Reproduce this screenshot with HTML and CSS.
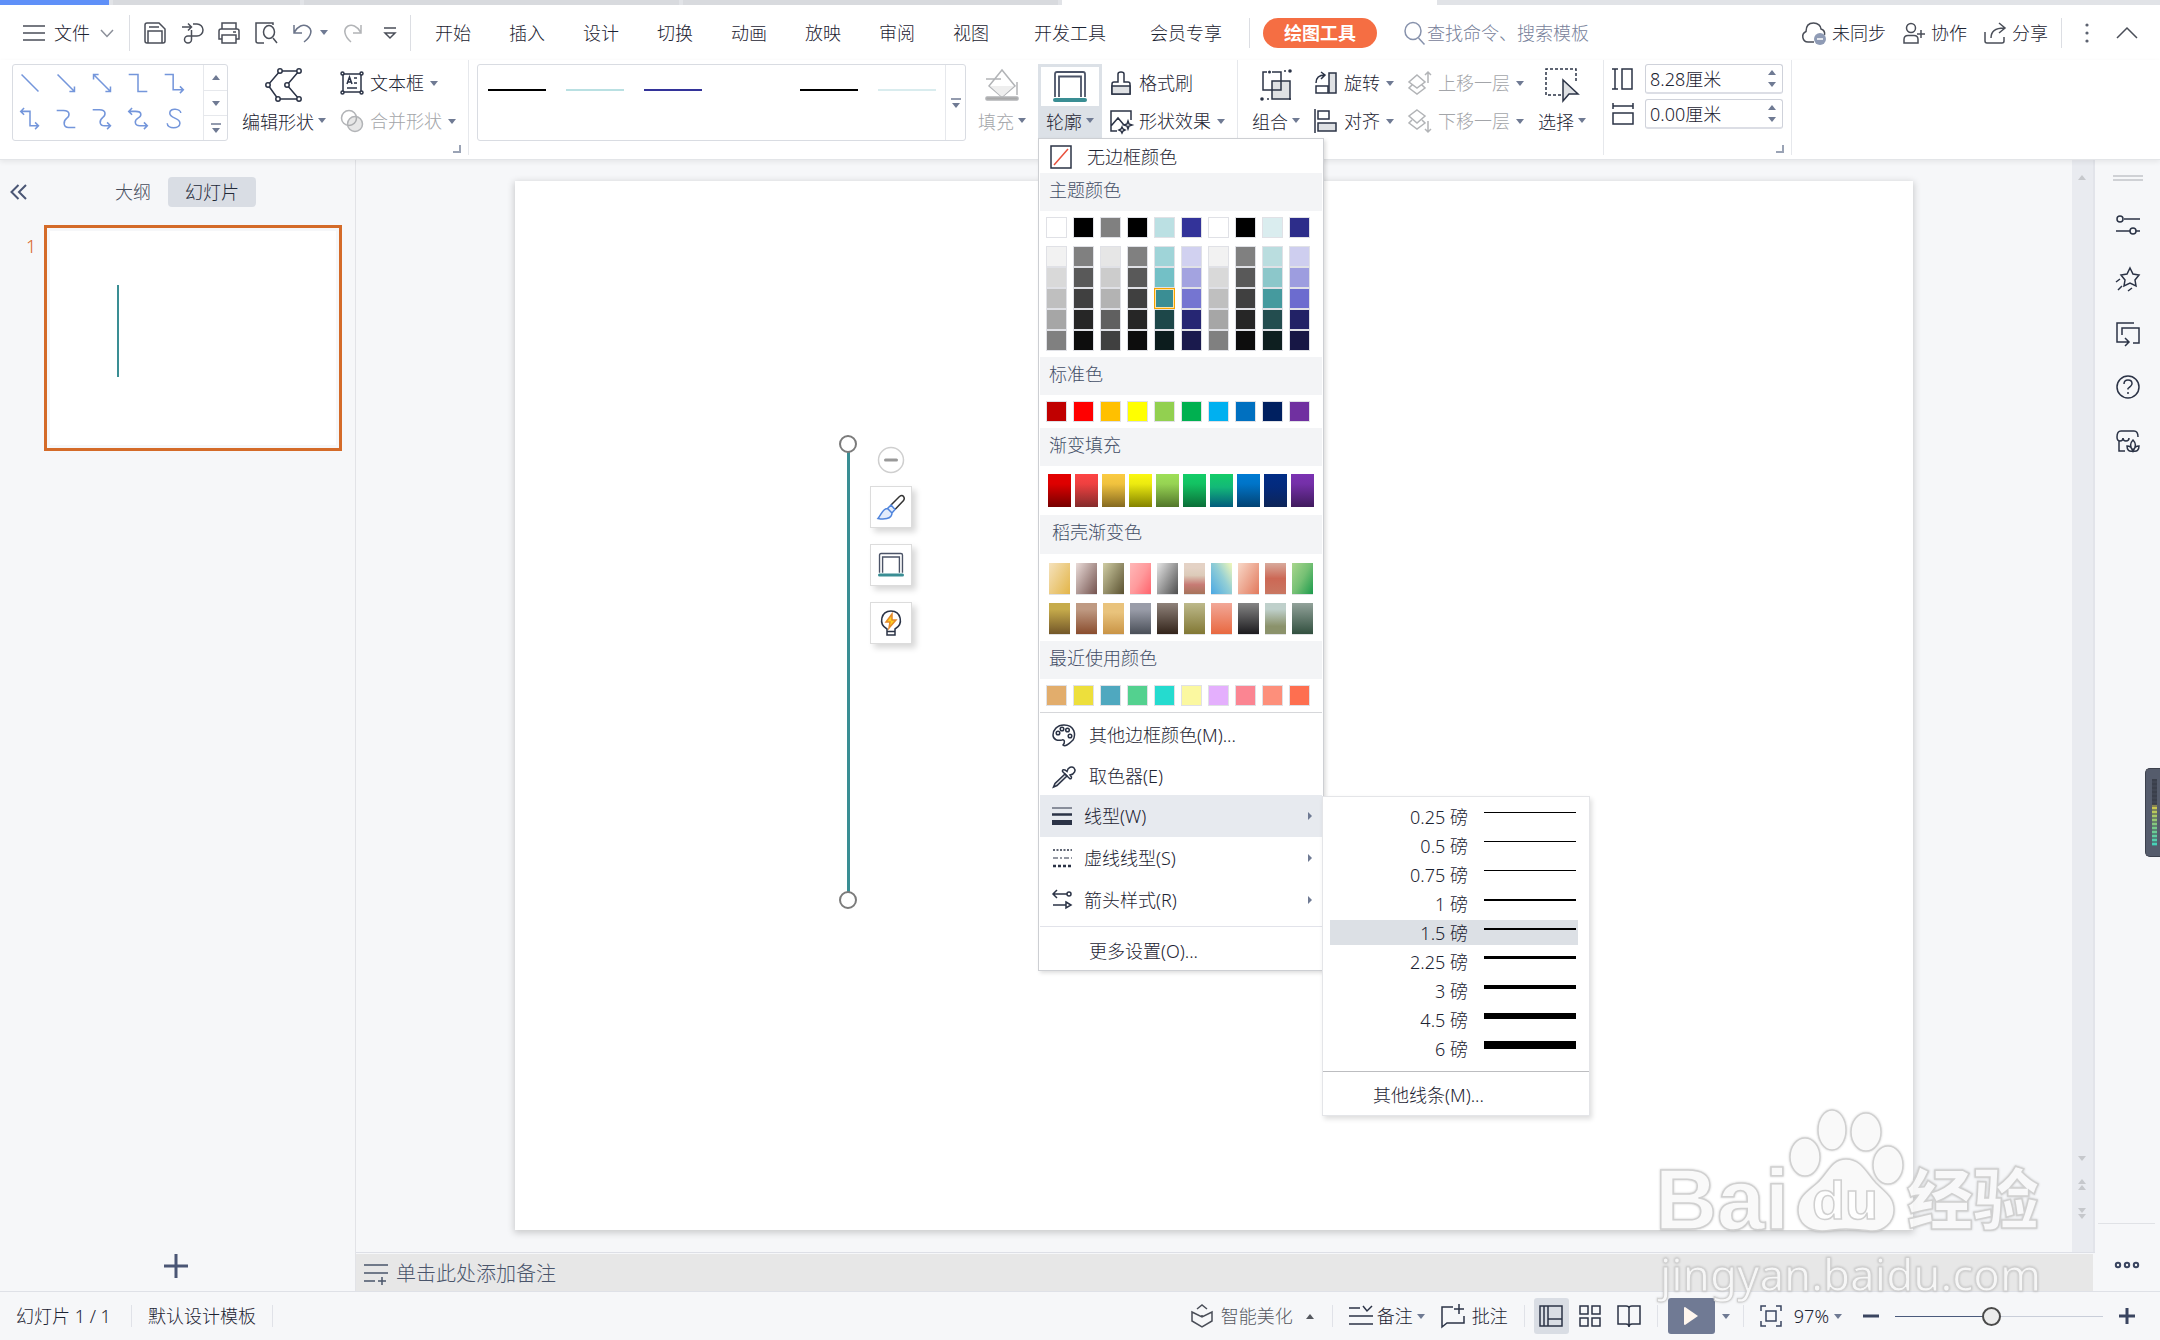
FILE: index.html
```html
<!DOCTYPE html>
<html lang="zh-CN">
<head>
<meta charset="utf-8">
<title>演示文稿</title>
<link rel="stylesheet" href="styles.css">
</head>
<body>
<svg class="defs" aria-hidden="true">
  <symbol id="caret" viewBox="0 0 8 5"><path d="M0 0h8L4 5z" fill="currentColor"/></symbol>
  <symbol id="caret-up" viewBox="0 0 8 5"><path d="M0 5h8L4 0z" fill="currentColor"/></symbol>
  <symbol id="more" viewBox="0 0 10 10"><path d="M0 1h10" stroke="currentColor" stroke-width="1.5"/><path d="M1 5h8L5 10z" fill="currentColor"/></symbol>
  <symbol id="outline" viewBox="0 0 34 34"><path d="M2 27V4q0-2 2-2h26q2 0 2 2v23M6 27V6.500h22V27" fill="none" stroke="currentColor" stroke-width="1.800"/><rect x="0" y="28" width="34" height="4" rx="2" fill="#3a8e94"/></symbol>
</svg>

<div class="app">
  <div class="doctabs"><span class="doctab current"></span><span class="doctab t2"></span><span class="doctab t3"></span><span class="doctab t3"></span><span class="doctab active"></span><span class="doctab rest"></span></div>

  <header class="menubar">
    <button class="file"><svg class="ic" viewBox="0 0 22 24" width="22" height="24"><path d="M0 5h22M0 12h22M0 19h22"/></svg>文件<svg class="ic thin" viewBox="0 0 16 16" width="16" height="16"><path d="m2 5 6 6.500L14 5"/></svg></button>
    <span class="sep tall"></span>
    <div class="quick">
      <button aria-label="保存"><svg class="ic" viewBox="0 0 24 24" width="24" height="24"><path d="M4 2h12l6 6v12q0 2-2 2H4q-2 0-2-2V4q0-2 2-2zM5 22V10h14v12M6 6h10"/></svg></button>
      <button aria-label="输出PDF"><svg class="ic" viewBox="0 0 24 24" width="24" height="24"><path d="M2 6h9M8 2.500 11.500 6 8 9.500M13 3h4a5.500 5.500 0 0 1 0 12H8a3.500 3.500 0 1 0 3.500 3.500V9"/></svg></button>
      <button aria-label="打印"><svg class="ic" viewBox="0 0 24 24" width="24" height="24"><path d="M5 8V2h14v6M5 18H2V10q0-2 2-2h16q2 0 2 2v8h-3M5 14h14v8H5zM16 11h3"/></svg></button>
      <button aria-label="打印预览"><svg class="ic" viewBox="0 0 24 24" width="24" height="24"><path d="M10 22H4q-2 0-2-2V2h17v2M19 17l4 5"/><ellipse cx="15" cy="11" rx="5.500" ry="6.500"/></svg></button>
      <button class="undo" aria-label="撤销"><svg class="ic slate" viewBox="0 0 24 24" width="24" height="24"><path d="M3 4v8h8M3.500 11C7 5 12 3 16 5c6 3 5 10-3 16"/></svg><svg class="caret"><use href="#caret"/></svg></button>
      <button aria-label="恢复"><svg class="ic pale" viewBox="0 0 24 24" width="24" height="24"><path d="M20 4v8h-8M19.500 11C16 5 11 3 7 5c-5 3-4 10 3 16"/></svg></button>
      <button aria-label="自定义"><svg class="ic" viewBox="0 0 24 24" width="24" height="24"><path d="M6 7h12M7 12h10l-5 5z"/></svg></button>
    </div>
    <span class="sep tall quickend"></span>
    <nav class="tabs"><button>开始</button><button>插入</button><button>设计</button><button>切换</button><button>动画</button><button>放映</button><button>审阅</button><button>视图</button></nav>
    <nav class="tabs wide"><button>开发工具</button><button>会员专享</button></nav>
    <span class="sep"></span>
    <button class="pill">绘图工具</button>
    <label class="search"><svg class="ic" viewBox="0 0 24 28" width="24" height="28"><ellipse cx="10" cy="12" rx="8" ry="8.500"/><path d="m15.500 19 6 6.500"/></svg><input type="text" placeholder="查找命令、搜索模板" aria-label="查找命令"></label>
    <div class="account">
      <button><svg class="ic" viewBox="0 0 26 26" width="26" height="26"><path d="M13 22H7a5.500 5.500 0 0 1-2-10.500C5 6 8 3 12.500 3S20 6 20 9c3 1 4 3.500 3.500 6"/><circle cx="19" cy="19" r="6" fill="#8f9bb5" stroke="none"/><path d="M16 19h6" stroke="#fff"/></svg>未同步</button>
      <button><svg class="ic" viewBox="0 0 24 26" width="24" height="26"><circle cx="9" cy="8" r="4.500"/><path d="M2 23v-3.500q0-4 4-4h6q4 0 4 4V23zM15 14h8M19 10v8"/></svg>协作</button>
      <button><svg class="ic" viewBox="0 0 24 26" width="24" height="26"><path d="M2 12v9q0 2 2 2h15q2 0 2-2v-4M8 18c0-7 4-10 13-10M16 3l6 5-6 5"/></svg>分享</button>
    </div>
    <span class="sep"></span>
    <button class="dots" aria-label="更多"><svg viewBox="0 0 6 22" width="6" height="22" fill="#5c6270"><circle cx="3" cy="3" r="1.600"/><circle cx="3" cy="11" r="1.600"/><circle cx="3" cy="19" r="1.600"/></svg></button>
    <button class="fold" aria-label="折叠功能区"><svg class="ic" viewBox="0 0 22 14" width="22" height="14"><path d="m1 12 10-10 10 10"/></svg></button>
  </header>

  <section class="ribbon">
    <div class="group shapes">
      <div class="gallery">
        <div class="cells">
          <button aria-label="直线"><svg viewBox="0 0 26 26"><path d="m3 3 20 20"/></svg></button>
          <button aria-label="箭头"><svg viewBox="0 0 26 26"><path d="m3 3 20 20M23 17v6h-6"/></svg></button>
          <button aria-label="双箭头"><svg viewBox="0 0 26 26"><path d="m3 3 20 20M23 17v6h-6M3 9V3h6"/></svg></button>
          <button aria-label="肘形"><svg viewBox="0 0 26 26"><path d="M2 3h11v20h11"/></svg></button>
          <button aria-label="肘形箭头"><svg viewBox="0 0 26 26"><path d="M2 3h10v18h12M20 17l4 4-4 4"/></svg></button>
          <button aria-label="肘形双箭头"><svg viewBox="0 0 26 26"><path d="M2 4h11v17h10M19 17l4 4-4 4M6 0 2 4l4 4"/></svg></button>
          <button aria-label="曲线"><svg viewBox="0 0 26 26"><path d="M2 3h8c9 0 7 7 4 9-5 4-4 11 2 11h8"/></svg></button>
          <button aria-label="曲线箭头"><svg viewBox="0 0 26 26"><path d="M2 2h8c9 0 7 7 4 9-5 4-4 10 2 10h7M19 17l4 4-4 4"/></svg></button>
          <button aria-label="曲线双箭头"><svg viewBox="0 0 26 26"><path d="M2 4h8c9 0 7 6 3 8-5 3-4 9 2 9h9M20 17l4 4-4 4M6 0 2 4l4 4"/></svg></button>
          <button aria-label="自由曲线"><svg viewBox="0 0 26 26"><path d="M21 6c0-5-13-7-13 0 0 7 12 5 12 12 0 7-15 7-15 0"/></svg></button>
        </div>
        <div class="scroll"><button aria-label="上"><svg class="caret"><use href="#caret-up"/></svg></button><button aria-label="下"><svg class="caret"><use href="#caret"/></svg></button><button aria-label="更多形状"><svg class="more"><use href="#more"/></svg></button></div>
      </div>
      <button class="big edit"><span class="pic"><svg class="ic dark" viewBox="0 0 38 34" width="38" height="34"><path d="M15 3h19L22 17l12 14H13L3 17z"/><g fill="#fff"><circle cx="15" cy="3" r="2.200"/><circle cx="34" cy="3" r="2.200"/><circle cx="22" cy="17" r="2.200"/><circle cx="34" cy="31" r="2.200"/><circle cx="13" cy="31" r="2.200"/><circle cx="3" cy="17" r="2.200"/></g></svg></span><span class="cap">编辑形状<svg class="caret"><use href="#caret"/></svg></span></button>
      <div class="pair">
        <button><svg class="ic dark" viewBox="0 0 24 24" width="24" height="24"><path d="M3 3h18v18H3zM7 13l2.500-7L12 13M8 11h3M14 7h3M14 12h3M7 17h10"/><g fill="#fff"><circle cx="2.500" cy="2.500" r="1.500"/><circle cx="21.500" cy="2.500" r="1.500"/><circle cx="2.500" cy="21.500" r="1.500"/><circle cx="21.500" cy="21.500" r="1.500"/></g></svg>文本框<svg class="caret"><use href="#caret"/></svg></button>
        <button class="off"><svg class="ic pale" viewBox="0 0 24 24" width="24" height="24"><circle cx="9" cy="9" r="7.500"/><circle cx="15" cy="15" r="7.500" fill="#8883" /></svg>合并形状<svg class="caret"><use href="#caret"/></svg></button>
      </div>
      <span class="corner"></span>
    </div>

    <div class="group styles">
      <div class="linebox">
        <div class="strokes"><button aria-label="黑色线条" style="background:#000"></button><button aria-label="浅青线条" style="background:#b9e0e2"></button><button aria-label="靛蓝线条" style="background:#333399"></button><button aria-label="白色线条" style="background:#fff"></button><button aria-label="深黑线条" style="background:#000"></button><button aria-label="淡青线条" style="background:#d9ecee"></button></div>
        <button class="open" aria-label="更多样式"><svg class="more"><use href="#more"/></svg></button>
      </div>
      <button class="big off"><span class="pic"><svg class="ic pale" viewBox="0 0 34 34" width="34" height="34"><path d="M4 18 17 2l13 16-13 11zM1 11h15M32 14v13"/><path d="M5 18h24L17 29z" fill="#eee" stroke="none"/><rect x="1" y="29" width="32" height="3" rx="1" fill="#a8a8a8"/></svg></span><span class="cap">填充<svg class="caret"><use href="#caret"/></svg></span></button>
      <div class="drawset">
        <div class="drop">
          <button class="big on"><span class="pic"><svg class="ink" width="34" height="34"><use href="#outline"/></svg></span><span class="cap">轮廓<svg class="caret"><use href="#caret"/></svg></span></button>
          <div class="menu">
            <button class="none"><svg class="ic dark" viewBox="0 0 22 24" width="22" height="24"><path d="M1 1h20v22H1z"/><path d="M4 20 18 4" stroke="#e8503c"/></svg>无边框颜色</button>
            <h3>主题颜色</h3>
            <div class="sw">
              <button style="background:#fff"></button><button style="background:#000"></button><button style="background:#808080"></button><button style="background:#000"></button><button style="background:#bbe0e3"></button><button style="background:#333399"></button><button style="background:#fff"></button><button style="background:#000"></button><button style="background:#daedef"></button><button style="background:#2d2d8a"></button>
            </div>
            <div class="sw tints">
              <button style="background:#f2f2f2"></button><button style="background:#808080"></button><button style="background:#e6e6e6"></button><button style="background:#808080"></button><button style="background:#9fd4d8"></button><button style="background:#d1d1f0"></button><button style="background:#f2f2f2"></button><button style="background:#808080"></button><button style="background:#badddf"></button><button style="background:#ceceef"></button>
              <button style="background:#d9d9d9"></button><button style="background:#595959"></button><button style="background:#cccccc"></button><button style="background:#595959"></button><button style="background:#73c0c6"></button><button style="background:#a3a3e0"></button><button style="background:#d9d9d9"></button><button style="background:#595959"></button><button style="background:#8cc7ca"></button><button style="background:#9d9ddf"></button>
              <button style="background:#bfbfbf"></button><button style="background:#404040"></button><button style="background:#b3b3b3"></button><button style="background:#404040"></button><button class="picked" style="background:#3a8e94"></button><button style="background:#7575d1"></button><button style="background:#bfbfbf"></button><button style="background:#404040"></button><button style="background:#459a9e"></button><button style="background:#6c6ccf"></button>
              <button style="background:#a6a6a6"></button><button style="background:#262626"></button><button style="background:#606060"></button><button style="background:#262626"></button><button style="background:#1d4749"></button><button style="background:#262673"></button><button style="background:#a6a6a6"></button><button style="background:#262626"></button><button style="background:#234d4f"></button><button style="background:#222266"></button>
              <button style="background:#808080"></button><button style="background:#0d0d0d"></button><button style="background:#404040"></button><button style="background:#0d0d0d"></button><button style="background:#0c1c1d"></button><button style="background:#1a1a4d"></button><button style="background:#808080"></button><button style="background:#0d0d0d"></button><button style="background:#0e1f20"></button><button style="background:#171745"></button>
            </div>
            <h3>标准色</h3>
            <div class="sw">
              <button style="background:#c00000"></button><button style="background:#ff0000"></button><button style="background:#ffc000"></button><button style="background:#ffff00"></button><button style="background:#92d050"></button><button style="background:#00b050"></button><button style="background:#00b0f0"></button><button style="background:#0070c0"></button><button style="background:#002060"></button><button style="background:#7030a0"></button>
            </div>
            <h3>渐变填充</h3>
            <div class="grads">
              <button style="background:linear-gradient(#e30000,#dd0000 30%,#760000)"></button><button style="background:linear-gradient(#fe4444,#ee4040 30%,#832b2b)"></button><button style="background:linear-gradient(#fbcb42,#f0c23e 30%,#846920)"></button><button style="background:linear-gradient(#fbf811,#ecea10 30%,#838200)"></button><button style="background:linear-gradient(#9edf57,#96d353 30%,#52762a)"></button><button style="background:linear-gradient(#14cd68,#13c262 30%,#0b6e38)"></button><button style="background:linear-gradient(#14cd68,#13b878 40%,#035c7d)"></button><button style="background:linear-gradient(#007bd3,#0074c8 30%,#034373)"></button><button style="background:linear-gradient(#012d86,#042a7c 40%,#0e2557)"></button><button style="background:linear-gradient(#7b32b2,#7430a8 30%,#401b5d)"></button>
            </div>
            <h3 class="docer">稻壳渐变色</h3>
            <div class="tiles">
              <button style="background:linear-gradient(120deg,#f5e2bd,#e3b548)"></button><button style="background:linear-gradient(120deg,#eadcd9,#74534e)"></button><button style="background:linear-gradient(120deg,#d0cda4,#5a5130)"></button><button style="background:linear-gradient(120deg,#ffb8b8,#ff9a9c 50%,#ff636c)"></button><button style="background:linear-gradient(120deg,#e6e6e6,#4e4e4e)"></button><button style="background:linear-gradient(#e4d2c5 15%,#dccbb9 40%,#c77b74 70%,#a6735a)"></button><button style="background:linear-gradient(60deg,#4aa8e4,#94cfd5 55%,#f2f8b8)"></button><button style="background:linear-gradient(120deg,#f8d8c8,#e2795c)"></button><button style="background:linear-gradient(#d8aa9c,#cc6855 50%,#c97762)"></button><button style="background:linear-gradient(120deg,#a9d68d,#75c074 50%,#1c9b4c)"></button>
              <button style="background:linear-gradient(#c6ab4b 20%,#735729)"></button><button style="background:linear-gradient(#bf9a83 20%,#8a4d2e)"></button><button style="background:linear-gradient(#e9c37c 30%,#c99446)"></button><button style="background:linear-gradient(#9a9da9 20%,#4a4f58)"></button><button style="background:linear-gradient(#8f827a,#33241a)"></button><button style="background:linear-gradient(#bdb98b,#827834)"></button><button style="background:linear-gradient(#f2a898,#e86840)"></button><button style="background:linear-gradient(#858585,#1c1b1e)"></button><button style="background:linear-gradient(#bfd0cb 20%,#8b926b 75%)"></button><button style="background:linear-gradient(#92a29a,#32503f)"></button>
            </div>
            <h3>最近使用颜色</h3>
            <div class="sw">
              <button style="background:#e2ad6c"></button><button style="background:#eddf3c"></button><button style="background:#4fa8bf"></button><button style="background:#53d18f"></button><button style="background:#25dbcf"></button><button style="background:#fbf8a0"></button><button style="background:#e4affd"></button><button style="background:#fb8592"></button><button style="background:#fd8f7b"></button><button style="background:#fe6f50"></button>
            </div>
            <hr>
            <button class="item"><svg class="ic dark" viewBox="0 0 24 24" width="24" height="24"><path d="M11 22c2 2 5 0 10-5 3-5 2-15-9-15C5 2 1 7 1 12c0 5 5 6 9 5 3-1 3 3 1 5z"/><circle cx="6" cy="10" r="1.800"/><circle cx="10" cy="6" r="1.800"/><circle cx="15.500" cy="7" r="1.800"/><circle cx="18" cy="13" r="1.800"/></svg>其他边框颜色(M)...</button>
            <button class="item"><svg class="ic dark" viewBox="0 0 24 24" width="24" height="24"><path d="M13 10 3 19.500 1.500 23 5 21.500 15 12z" fill="#dfe1e4"/><path d="m10.500 7.500 7 7q2 1 2-1.500l-1.500-2c5-1 6-5 4-7s-6-1-7 3.500l-2-1.500q-3-1-2.500 1.500z"/></svg>取色器(E)</button>
            <div class="parent">
              <button class="item sub hot"><svg class="ic dark" viewBox="0 0 20 20" width="20" height="20"><path d="M0 2h20" stroke-width="1"/><path d="M0 8.500h20" stroke-width="2.500"/><path d="M0 16.500h20" stroke-width="5"/></svg>线型(W)<svg class="go" viewBox="0 0 4 8"><path d="m0 0 4 4-4 4z" fill="currentColor"/></svg></button>
              <div class="submenu">
                <button>0.25 磅<span style="height:1px"></span></button>
                <button>0.5 磅<span style="height:1px"></span></button>
                <button>0.75 磅<span style="height:1px"></span></button>
                <button>1 磅<span style="height:2px"></span></button>
                <button class="picked">1.5 磅<span style="height:2px"></span></button>
                <button>2.25 磅<span style="height:3px"></span></button>
                <button>3 磅<span style="height:4px"></span></button>
                <button>4.5 磅<span style="height:6px"></span></button>
                <button>6 磅<span style="height:8px"></span></button>
                <hr>
                <button class="other">其他线条(M)...</button>
              </div>
            </div>
            <button class="item sub"><svg class="ic dark" viewBox="0 0 20 20" width="20" height="20"><path d="M1 2h19" stroke-width="1.500" stroke-dasharray="2 1.500"/><path d="M1 10h19" stroke-width="1" stroke-dasharray="5 2 2 2"/><path d="M1 18h19" stroke-width="2.500" stroke-dasharray="3 2"/></svg>虚线线型(S)<svg class="go" viewBox="0 0 4 8"><path d="m0 0 4 4-4 4z" fill="currentColor"/></svg></button>
            <button class="item sub"><svg class="ic dark" viewBox="0 0 20 20" width="20" height="20"><path d="M1 4h14M5 0 1 4l4 4M1 15h13M14 12l5 3-5 3z"/><circle cx="17" cy="4" r="2"/></svg>箭头样式(R)<svg class="go" viewBox="0 0 4 8"><path d="m0 0 4 4-4 4z" fill="currentColor"/></svg></button>
            <hr class="light">
            <button class="item last">更多设置(O)...</button>
          </div>
        </div>
        <div class="pair">
          <button><svg class="ic dark" viewBox="0 0 24 24" width="24" height="24"><path d="M3 23V13q0-2 2-2h4V3q0-2 3-2t3 2v8h4q2 0 2 2v10z"/><path d="M3 15h18v8H3z" fill="#dfe1e4"/></svg>格式刷</button>
          <button><svg class="ic dark" viewBox="0 0 24 24" width="24" height="24"><path d="M8 22H2V2h20v9M2 17l7-8 6 7M19 12l1 3 3 1-3 1-1 3-1-3-3-1 3-1zM13 18l1 2 2 1-2 1-1 2-1-2-2-1 2-1z"/></svg>形状效果<svg class="caret"><use href="#caret"/></svg></button>
        </div>
      </div>
    </div>

    <div class="group arrange">
      <button class="big"><span class="pic"><svg class="ic dark" viewBox="0 0 32 32" width="32" height="32"><path d="M12 12h18v18H12z" fill="#dfe1e4"/><path d="M7 3H3v18h18V3h-9"/><g fill="currentColor" stroke="none"><circle cx="9.500" cy="3" r="1.500"/><circle cx="30" cy="2" r="1.800"/><circle cx="2" cy="30" r="1.800"/><circle cx="30" cy="30" r="1"/><circle cx="25" cy="2" r="1"/><circle cx="8" cy="30" r="1"/></g></svg></span><span class="cap">组合<svg class="caret"><use href="#caret"/></svg></span></button>
      <div class="pair">
        <button><svg class="ic dark" viewBox="0 0 24 24" width="24" height="24"><path d="M2 15h12v7H2z"/><path d="M15 2h7v20h-7z" fill="#dfe1e4"/><path d="M2 12c0-4 2-8 9-8M7 1l4 3-4 4"/></svg>旋转<svg class="caret"><use href="#caret"/></svg></button>
        <button><svg class="ic dark" viewBox="0 0 24 24" width="24" height="24"><path d="M1 0v24M4 2h11v8H4z"/><path d="M4 14h18v8H4z" fill="#dfe1e4"/></svg>对齐<svg class="caret"><use href="#caret"/></svg></button>
      </div>
      <div class="pair">
        <button class="off"><svg class="ic pale" width="24" height="24" viewBox="0 0 24 24"><path d="m9 4 8 7-8 6-8-6zM4 14l-3 3 8 6 8-6-3-3M20 12V1M17 4l3-3 3 3"/></svg>上移一层<svg class="caret"><use href="#caret"/></svg></button>
        <button class="off"><svg class="ic pale" width="24" height="24" viewBox="0 0 24 24"><path d="m9 1 8 6-8 7-8-7zM4 11l-3 3 8 6 8-6-3-3M20 12v11M17 20l3 3 3-3"/></svg>下移一层<svg class="caret"><use href="#caret"/></svg></button>
      </div>
      <button class="big"><span class="pic"><svg class="ic dark" viewBox="0 0 36 36" width="36" height="36"><path d="M17 28H2V2h30v14" stroke-dasharray="3 2"/><path d="M19 13v21l6-7h9z" fill="#dfe1e4"/></svg></span><span class="cap">选择<svg class="caret"><use href="#caret"/></svg></span></button>
    </div>

    <div class="group size">
      <label><svg class="ic dark" viewBox="0 0 22 24" width="22" height="24"><path d="M3 2v20M0 2h6M0 22h6M10 2h10v20H10z"/></svg><span class="spin"><input type="text" value="8.28厘米" aria-label="高度"><span class="arrows"><svg class="caret"><use href="#caret-up"/></svg><svg class="caret"><use href="#caret"/></svg></span></span></label>
      <label><svg class="ic dark" viewBox="0 0 22 24" width="22" height="24"><path d="M1 4h20M1 1v6M21 1v6M1 11h20v11H1z"/></svg><span class="spin"><input type="text" value="0.00厘米" aria-label="宽度"><span class="arrows"><svg class="caret"><use href="#caret-up"/></svg><svg class="caret"><use href="#caret"/></svg></span></span></label>
      <span class="corner"></span>
    </div>
  </section>

  <main class="work">
    <aside class="panel">
      <div class="ptabs"><button class="close" aria-label="收起"><svg class="ic" viewBox="0 0 18 16" width="18" height="16"><path d="M8.500 1 1.500 8l7 7M16 1 9 8l7 7"/></svg></button><button class="ptab">大纲</button><button class="ptab on">幻灯片</button></div>
      <div class="thumbrow"><span class="num">1</span><button class="thumb" aria-label="幻灯片 1"><span class="page"><span class="mini"></span></span></button></div>
      <button class="add" aria-label="新建幻灯片"><svg class="ic" viewBox="0 0 26 26" width="26" height="26"><path d="M13 1v24M1 13h24"/></svg></button>
    </aside>

    <section class="center">
      <div class="view">
        <div class="canvas">
          <div class="slide">
            <span class="line"><i class="knob"></i><i class="knob"></i></span>
            <div class="float">
              <button class="minus" aria-label="收起工具"><svg viewBox="0 0 28 28" width="28" height="28"><circle cx="14" cy="14" r="12.500" fill="#fff" stroke="#cfcfcf" stroke-width="1.500"/><path d="M8.500 14h11" stroke="#999" stroke-width="3" stroke-linecap="round"/></svg></button>
              <button class="fb" aria-label="样式"><svg class="ic" viewBox="0 0 28 28" width="28" height="28"><path d="m14 12 8.500-8.500q2.500-2 4 0t0 4L18 16.500" stroke="#333"/><path d="m14 12 4 4.500-3 3.500-4.500-4.500zM10.500 15.500c-5 0-6 6-9.500 10 5 1 14 1 14-5.500z" fill="#e3ecfb" stroke="#4f84dc"/></svg></button>
              <button class="fb" aria-label="轮廓"><svg class="ink" width="26" height="26"><use href="#outline"/></svg></button>
              <button class="fb" aria-label="灵感"><svg class="ic dark" viewBox="0 0 28 28" width="28" height="28"><path d="M10 20c-9-5-6-18 4-18s13 13 4 18v6h-8zM10 22.500h8"/><path d="m15 5-6 8h4l-1 6 7-8h-4z" fill="#ffd21f" stroke="#e58a2b"/></svg></button>
            </div>
          </div>
        </div>
        <div class="vscroll"><svg class="caret"><use href="#caret-up"/></svg><span class="grow"></span><svg class="caret"><use href="#caret"/></svg><span class="two"><svg class="caret"><use href="#caret-up"/></svg><svg class="caret"><use href="#caret-up"/></svg></span><span class="two"><svg class="caret"><use href="#caret"/></svg><svg class="caret"><use href="#caret"/></svg></span></div>
      </div>
      <div class="notes"><svg class="ic" viewBox="0 0 24 22" width="24" height="22"><path d="M0 2h24M0 10h24M0 18h11M14 18h8M18 14v8"/></svg>单击此处添加备注</div>
    </section>

    <aside class="tools">
      <span class="grip"></span>
      <button aria-label="属性"><svg class="ic dark" viewBox="0 0 24 24" width="24" height="24"><path d="M8 6h16M0 18h14M20 18h4"/><circle cx="4" cy="6" r="3"/><circle cx="17" cy="18" r="3"/></svg></button>
      <button aria-label="动画"><svg class="ic dark" viewBox="0 0 24 24" width="24" height="24"><path d="m14 1 3 6 6 1-4 5 1 6-6-3-6 3 1-6-4-5 6-1zM0 15l4-3M2 23l4-4M12 24l4-3"/></svg></button>
      <button aria-label="切换"><svg class="ic dark" viewBox="0 0 24 24" width="24" height="24"><path d="M18 2H1v19h12M9 17l4 4-4 4M6 14V7h17v15h-6"/></svg></button>
      <button aria-label="帮助"><svg class="ic dark" viewBox="0 0 24 24" width="24" height="24"><circle cx="12" cy="12" r="11"/><path d="M8 9q0-4 4-4t4 3.500q0 2-4 5v1M12 17v2"/></svg></button>
      <button aria-label="素材"><svg class="ic dark" viewBox="0 0 24 24" width="24" height="24"><path d="M1 8q0-6 4-6h13q4 0 4 6M1 8q0 4 3 4t3-3q0 3 3 3t3-3M3 12v10h6M17 22c-4-5-3-8 0-11 3 3 4 6 0 11zM17 22c-4 1-6-1-6-5 3 0 5 2 6 5 1-3 3-5 6-5 0 4-2 6-6 5z"/></svg></button>
      <span class="grow"></span>
      <button class="ooo" aria-label="更多工具"><svg class="ic" viewBox="0 0 26 8" width="26" height="8"><circle cx="4" cy="4" r="2.200"/><circle cx="13" cy="4" r="2.200"/><circle cx="22" cy="4" r="2.200"/></svg></button>
      <div class="meter"><span></span></div>
    </aside>
  </main>

  <footer class="status">
    <span class="count">幻灯片 1 / 1</span><span class="sep"></span><span>默认设计模板</span><span class="sep"></span>
    <div class="right">
      <button class="beauty"><svg class="ic" viewBox="0 0 22 24" width="22" height="24"><path d="M6 5l5-4 5 4M1 8l10 5 10-5v9l-10 6L1 17zM11 13V11"/></svg>智能美化<svg class="caret"><use href="#caret-up"/></svg></button>
      <span class="sep"></span>
      <button class="note"><svg class="ic dark" viewBox="0 0 24 22" width="24" height="22"><path d="M0 3h11M14 1l4 5 5-5M0 11h24M0 19h24"/></svg>备注<svg class="caret"><use href="#caret"/></svg></button>
      <button class="note"><svg class="ic dark" viewBox="0 0 24 24" width="24" height="24"><path d="M12 3H1v20l5-4h17v-7M18 0v10M13 5h10"/></svg>批注</button>
      <span class="sep"></span>
      <div class="views">
        <button class="on" aria-label="普通视图"><svg class="ic dark" viewBox="0 0 24 24" width="24" height="24"><path d="M1 2h22v20H1zM9 2v20M5 2v20M9 15h14"/></svg></button>
        <button aria-label="幻灯片浏览"><svg class="ic dark" viewBox="0 0 24 24" width="24" height="24"><path d="M2 2h8v8H2zM14 2h8v8h-8zM2 14h8v8H2zM14 14h8v8h-8z"/></svg></button>
        <button aria-label="阅读视图"><svg class="ic dark" viewBox="0 0 24 24" width="24" height="24"><path d="M12 23V4q0-2-3-2H1v18h8q3 0 3 3 0-3 3-3h8V2h-8q-3 0-3 2"/></svg></button>
      </div>
      <span class="sep"></span>
      <div class="show"><button class="play" aria-label="播放"><svg viewBox="0 0 14 18" width="14" height="18"><path d="M0 1q0-1 1-1l13 9-13 9q-1 0-1-1z" fill="#fff6ee"/></svg></button><button aria-label="播放选项"><svg class="caret"><use href="#caret"/></svg></button></div>
      <span class="sep"></span>
      <div class="zoom">
        <button aria-label="最佳显示比例"><svg class="ic" viewBox="0 0 22 22" width="22" height="22"><path d="M1 6V1h5M16 1h5v5M21 16v5h-5M6 21H1v-5M6 6h10v10H6z"/></svg></button>
        <button class="pct">97%<svg class="caret"><use href="#caret"/></svg></button>
        <button aria-label="缩小"><svg viewBox="0 0 16 16" width="16" height="16"><path d="M0 8h16" stroke="#3a4560" stroke-width="3"/></svg></button>
        <input type="range" min="0" max="100" value="46" aria-label="缩放">
        <button aria-label="放大"><svg viewBox="0 0 16 16" width="16" height="16"><path d="M0 8h16M8 0v16" stroke="#3a4560" stroke-width="3"/></svg></button>
      </div>
    </div>
  </footer>

  <svg class="mark" viewBox="0 0 400 210" width="400" height="210">
    <g class="glow">
      <text x="15" y="139" class="m-bai">Bai</text>
      <ellipse cx="165" cy="67" rx="15" ry="19"/><ellipse cx="192" cy="40" rx="14" ry="20"/><ellipse cx="226" cy="42" rx="15" ry="19"/><ellipse cx="248" cy="75" rx="15" ry="19"/>
      <path d="M206 69c15 0 20 13 30 24 9 9 18 14 18 27 0 12-10 22-24 21-8-1-14-2-24-2s-16 2-24 2c-14 0-24-8-24-21 0-14 10-19 19-27 11-10 14-24 29-24z"/>
      <text x="172" y="129" class="m-du">du</text>
      <text x="267" y="134" class="m-jy">经验</text>
      <text x="20" y="201" class="m-url">jingyan.baidu.com</text>
    </g>
  </svg>
</div>
</body>
</html>
```
FILE: styles.css
```css
* { box-sizing: border-box; }
body { margin: 0; background: #f6f7f9; color: #1c2332; font: 300 18px/24px "Noto Sans", "Noto Sans CJK SC", sans-serif; }
button, input { font: inherit; color: inherit; border: 0; background: none; padding: 0; margin: 0; }
button { display: flex; align-items: center; white-space: nowrap; }
svg { display: block; flex: none; overflow: visible; }
h3 { margin: 0; font: inherit; }
hr { border: 0; border-top: 1px solid #d6d7da; margin: 0; }
.defs { position: absolute; width: 0; height: 0; }
.app { position: relative; min-height: 100vh; display: grid; grid-template-rows: 5px 55px 100px 1fr 49px; overflow: hidden; }
.ic { fill: none; stroke: #4a4e58; stroke-width: 1.5; }
.ic.thin { stroke: #8b8f99; }
.ic.slate { stroke: #6b7489; }
.ic.pale { stroke: #b2b4b7; }
.dark { stroke: #2b3346; color: #2b3346; }
.ink { color: #4b5367; }
.caret { width: 8px; height: 5px; color: #6f7a93; }
.more { width: 10px; height: 10px; color: #6f7a93; }
.grow { flex: 1; }
.sep { width: 1px; height: 30px; background: #dcdee3; flex: none; }
.sep.tall { height: 36px; }

.doctabs { display: flex; background: #e1e3e7; gap: 4px; }
.doctab { background: #d8dade; }
.doctab.current { width: 109px; background: #5f90f8; }
.t2 { width: 187px; }
.t3 { width: 375px; }
.doctab.active { width: 375px; background: #fff; }
.doctab.rest { flex: 1; background: #e1e3e7; }

.menubar { display: flex; align-items: center; background: #fff; padding: 0 22px 0 23px; min-width: 0; }
.file { gap: 9px; margin-right: 14px; }
.quick { display: flex; gap: 13px; margin: 0 8px 0 13px; }
.undo { gap: 5px; }
.quickend { margin-right: 5px; }
.tabs { display: flex; }
.tabs button { padding: 0 19px; }
.tabs.wide { margin: 0 5px 0 4px; }
.tabs.wide button { padding: 0 22px; }
.pill { margin: 0 26px 0 13px; padding: 0 21px; height: 30px; border-radius: 15px; background: #f56e43; color: #fff; font-weight: 700; }
.search { display: flex; align-items: center; flex: 1; }
.search .ic { stroke: #8792ac; }
.search input { flex: 1; min-width: 0; color: #77819a; }
.search input::placeholder { color: #77819a; opacity: 1; }
.account { display: flex; gap: 16px; margin-right: 13px; }
.account button { gap: 5px; }
.dots { margin: 0 26px 0 22px; }

.ribbon { position: relative; z-index: 5; display: flex; background: #fff; border-bottom: 1px solid #e3e5e8; box-shadow: 0 2px 5px #00000012; }
.group { position: relative; display: flex; padding-top: 4px; height: 95px; border-right: 1px solid #e6e8ec; }
.corner { position: absolute; right: 7px; bottom: 2px; width: 8px; height: 8px; border: solid #9aa3b5; border-width: 0 2px 2px 0; }
.shapes { padding-left: 12px; padding-right: 12px; gap: 14px; }
.gallery { display: flex; width: 216px; height: 77px; border: 1px solid #d9dce2; border-radius: 3px; }
.cells { flex: 1; display: grid; grid-template-columns: repeat(5, 36px); grid-auto-rows: 36px; padding-left: 4px; }
.cells svg { width: 22px; height: 22px; fill: none; stroke: #7496db; stroke-width: 1.8; }
.cells button { padding-left: 2px; }
.scroll { width: 24px; display: grid; grid-template-rows: repeat(3, 1fr); border-left: 1px solid #e6e8ec; }
.scroll button { justify-content: center; }
.scroll button + button { border-top: 1px solid #e6e8ec; }
.big { flex-direction: column; height: 74px; }
.edit { width: 84px; }
.pic { display: flex; align-items: center; justify-content: center; height: 42px; }
.cap { display: flex; align-items: center; gap: 4px; height: 32px; }
.cap .caret { margin-bottom: 4px; }
.pair { display: grid; grid-template-rows: 38px 38px; }
.pair button { gap: 6px; }
.off { color: #a3a5a9; }
.linebox { display: flex; width: 489px; height: 77px; border: 1px solid #d9dce2; border-radius: 3px; }
.strokes { display: flex; flex: 1; gap: 20px; padding: 24px 0 0 10px; }
.strokes button { width: 58px; height: 2px; flex: none; }
.open { width: 20px; height: 75px; justify-content: center; border-left: 1px solid #e6e8ec; }
.styles { padding-left: 8px; padding-right: 12px; gap: 12px; }
.drawset { display: flex; gap: 7px; }
.drop { position: relative; }
.big.on { width: 64px; background: #dce1e7; }
.big.on .pic { width: 58px; height: 39px; margin: 3px 3px 0; background: #fff; }
.arrange { padding-left: 14px; padding-right: 17px; gap: 14px; }
.size { display: grid; grid-template-rows: 30px 30px; row-gap: 5px; padding-left: 8px; padding-right: 8px; align-content: start; }
.size label { display: flex; align-items: center; gap: 11px; }
.spin { display: flex; align-items: center; width: 138px; height: 30px; border: 1px solid #cfd2da; border-bottom: 2px solid #dcdee5; border-radius: 3px; padding: 0 6px 0 4px; }
.spin input { flex: 1; min-width: 0; }
.arrows { display: grid; gap: 7px; }

.menu { position: absolute; left: 0; top: 74px; width: 286px; padding: 0 1px; background: #fff; border: 1px solid #cdcfd3; box-shadow: 2px 2px 4px #00000022; z-index: 10; }
.menu .none { width: 100%; height: 34px; padding: 2px 0 0 10px; gap: 15px; }
.menu h3 { height: 38px; line-height: 34px; padding-left: 9px; background: #f3f4f6; color: #434e66; }
.menu h3.docer { height: 39px; padding-left: 12px; }
.sw { display: grid; grid-template-columns: repeat(10, 21px); column-gap: 6px; padding: 6px; }
.sw button { width: 21px; height: 21px; border: 1px solid #e0e1e6; }
.sw.tints { padding-top: 2px; }
.sw .picked { border: 1px solid #f5a300; box-shadow: inset 0 0 0 1px #fde3a8; }
.grads { display: grid; grid-template-columns: repeat(10, 23px); column-gap: 4px; padding: 8px; }
.grads button { height: 33px; }
.tiles { display: grid; grid-template-columns: repeat(10, 21px); column-gap: 6px; row-gap: 8px; padding: 9px 9px 6px; }
.tiles button { height: 32px; border-bottom: 1px solid #e0e1e4; }
.item { width: 100%; height: 41px; padding: 2px 0 0 12px; gap: 13px; }
.item.sub { height: 42px; gap: 12px; padding: 0 10px 0 12px; }
.hot { background: #e7eaef; }
.go { width: 4px; height: 8px; margin-left: auto; color: #6f7a93; }
.light { border-color: #e2e3ea; margin-top: 5px; }
.item.last { height: 43px; padding: 5px 0 0 49px; }
.parent { position: relative; }
.submenu { position: absolute; left: 282px; top: 1px; width: 268px; padding: 7px 0 0 7px; background: #fff; border: 1px solid #e4e5e8; box-shadow: 2px 3px 5px #00000022; }
.submenu button { width: 248px; height: 25px; margin-bottom: 4px; justify-content: flex-end; gap: 16px; padding-right: 2px; }
.submenu button span { width: 92px; background: #000; margin-bottom: 8px; }
.submenu .picked { background: #dce0e5; }
.submenu hr { margin: 10px 0 0 -7px; border-color: #bcbdc0; }
.submenu .other { height: 43px; margin: 0; padding: 2px 0 0 43px; justify-content: flex-start; }

.work { display: grid; grid-template-columns: 356px 1fr 65px; background: #f6f7f9; }
.panel { display: flex; flex-direction: column; border-right: 1px solid #e2e3e7; padding: 17px 13px 12px 10px; }
.ptabs { display: flex; align-items: center; }
.close { width: 88px; }
.close .ic { stroke: #4a5675; stroke-width: 2; }
.add .ic { stroke: #4a5675; stroke-width: 3; }
.ptab { height: 30px; padding: 0 17px; border-radius: 4px; color: #464d5c; }
.ptab.on { background: #d9dde4; color: #222938; }
.thumbrow { display: flex; margin-top: 18px; }
.num { width: 34px; padding: 9px 0 0 16px; color: #d8641e; }
.thumb { flex: 1; height: 226px; border: 3px solid #d46b29; padding: 3px; }
.page { position: relative; flex: 1; height: 100%; background: #fff; }
.mini { position: absolute; left: 67px; top: 54px; width: 2px; height: 92px; background: #3a8e94; }
.add { margin: auto auto 0; }

.center { display: flex; flex-direction: column; min-width: 0; }
.view { flex: 1; display: flex; border-bottom: 1px solid #dddfe6; }
.canvas { flex: 1; padding: 21px 159px 22px; }
.slide { position: relative; aspect-ratio: 4 / 3; background: #fff; box-shadow: 0 2px 7px 1px #0000002e; }
.line { position: absolute; left: 332px; top: 271px; width: 3px; height: 440px; background: #3a8e94; }
.knob { position: absolute; left: -8px; top: -17px; width: 18px; height: 18px; border: 2px solid #7b7b7b; border-radius: 50%; background: #fff; }
.knob + .knob { top: auto; bottom: -17px; }
.float { position: absolute; left: 355px; top: 265px; display: grid; gap: 16px; justify-items: center; }
.minus { margin-bottom: -4px; }
.fb { width: 42px; height: 42px; justify-content: center; background: #fff; border: 1px solid #dcdcdc; box-shadow: 4px 4px 6px #00000028; }
.vscroll { width: 23px; display: flex; flex-direction: column; align-items: center; gap: 18px; padding: 15px 2px 33px 0; background: #e9ebf0; border-right: 2px solid #e2e4ea; }
.vscroll .caret { color: #c6c8cc; }
.two { display: grid; gap: 1px; }
.notes { display: flex; align-items: center; gap: 8px; height: 38px; margin-right: 2px; padding: 2px 8px 0; background: #e7e7e7; border-top: 1px solid #f6f7f9; color: #4a556b; font-size: 20px; }
.notes .ic { stroke: #4a556b; }

.tools { position: relative; display: flex; flex-direction: column; align-items: center; gap: 30px; padding: 15px 0 22px; }
.grip { width: 30px; height: 6px; border: solid #cfd1d5; border-width: 2px 0; }
.grip + button { margin-top: 2px; }
.ooo { align-self: stretch; justify-content: center; border-top: 1px solid #e0e2e6; margin: 0 5px 0 3px; padding-top: 37px; }
.ooo .ic { stroke: #3a4560; stroke-width: 2; }
.meter { position: absolute; right: 0; top: 608px; width: 15px; height: 89px; padding: 10px 3px 10px 6px; border: 1px solid #3c414d; border-right: 0; border-radius: 5px 0 0 5px; background: #555c6c; }
.meter span { display: block; height: 100%; background: repeating-linear-gradient(#0000 0 2px, #454b5988 2px 4px), linear-gradient(#3a3f4b 38%, #d6c648 39%, #7cc984 70%, #43d2bd); }

.status { display: flex; align-items: center; border-top: 1px solid #dfe1e7; background: #f6f7f9; padding: 0 25px 0 16px; gap: 16px; }
.count { min-width: 99px; }
.status .sep { height: 22px; background: #e0e2e8; }
.right, .views, .show, .zoom { display: flex; align-items: center; }
.right { margin-left: auto; }
.beauty { gap: 8px; margin-right: 18px; color: #55585f; }
.beauty .caret { margin-left: 5px; color: #55585f; }
.note { gap: 4px; margin-left: 16px; }
.note + .note { margin-right: 16px; gap: 7px; }
.views { gap: 4px; margin: 0 10px 0 9px; }
.views button { width: 35px; height: 36px; justify-content: center; border-radius: 3px; }
.views .on { background: #d9dde4; }
.show { gap: 7px; margin: 0 13px 0 10px; }
.play { width: 47px; height: 36px; justify-content: center; border-radius: 3px; background: #707a94; }
.zoom { gap: 16px; margin-left: 16px; }
.zoom .ic { stroke: #3a4560; }
.pct { gap: 5px; margin: 0 5px 0 -4px; }
input[type=range] { appearance: none; width: 208px; height: 20px; }
input[type=range]::-webkit-slider-runnable-track { height: 1px; background: linear-gradient(90deg, #4a5a7c 46%, #c9ced9 46%); }
input[type=range]::-webkit-slider-thumb { appearance: none; width: 19px; height: 19px; margin-top: -9px; border: 2px solid #4a4a4a; border-radius: 50%; background: #ececec; }

.mark { position: absolute; right: 120px; bottom: 40px; z-index: 3; pointer-events: none; }
.glow { fill: #fff; fill-opacity: .85; stroke: #d0d0d0; stroke-width: 1.5; filter: drop-shadow(0 0 1px #0003); }
.m-bai { font: 700 86px "Liberation Sans", sans-serif; }
.m-du { font: 700 54px "Liberation Sans", sans-serif; }
.m-jy { font: 900 66px "Noto Sans CJK SC", sans-serif; }
.m-url { font: 400 44px "Noto Sans", sans-serif; stroke-width: 1; }
```
